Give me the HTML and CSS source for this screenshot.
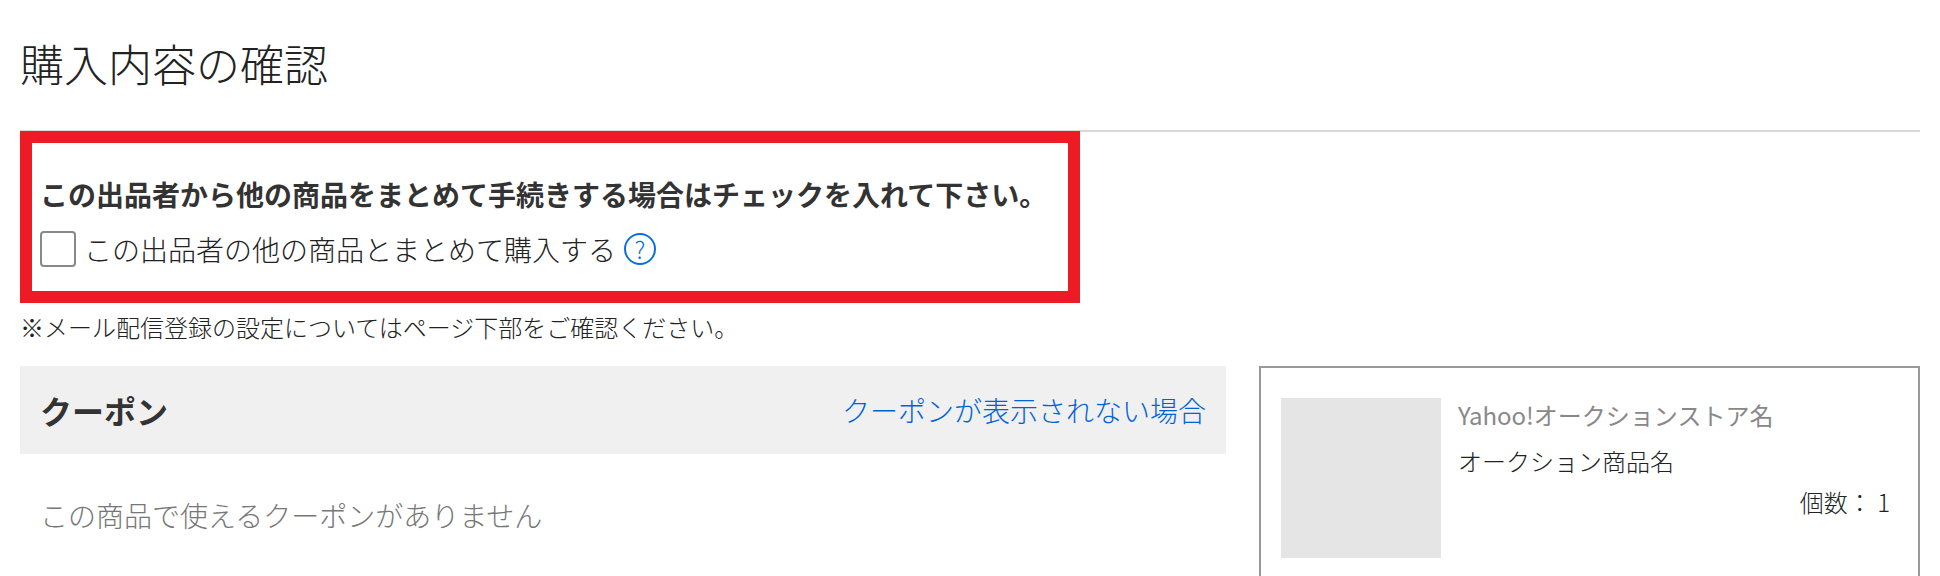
FILE: index.html
```html
<!DOCTYPE html>
<html lang="ja">
<head>
  <meta charset="UTF-8" />
  <title>購入内容の確認</title>
  <link rel="stylesheet" href="styles.css">
</head>
<body>
  <div class="page">
    <h1 class="title">購入内容の確認</h1>

    <section class="bundle">
      <p class="bundle-lead">この出品者から他の商品をまとめて手続きする場合はチェックを入れて下さい。</p>
      <label class="bundle-check">
        <span class="checkbox"></span>
        <span>この出品者の他の商品とまとめて購入する</span>
        <span class="help">?</span>
      </label>
    </section>

    <p class="notice">※メール配信登録の設定についてはページ下部をご確認ください。</p>

    <div class="columns">
      <div class="coupon">
        <header class="coupon-head">
          <h2>クーポン</h2>
          <a href="#">クーポンが表示されない場合</a>
        </header>
        <p class="coupon-empty">この商品で使えるクーポンがありません</p>
      </div>

      <aside class="item">
        <div class="item-thumb"></div>
        <div class="item-info">
          <p class="item-store">Yahoo!オークションストア名</p>
          <p class="item-name">オークション商品名</p>
          <p class="item-qty">個数： 1</p>
        </div>
      </aside>
    </div>
  </div>
</body>
</html>
```

FILE: styles.css
```css
* {
  margin: 0;
  padding: 0;
  box-sizing: border-box;
}

html, body {
  height: 576px;
  overflow: hidden;
}

body {
  background: #fff;
  color: #222;
  font-family: "Noto Sans CJK JP", "Noto Sans", sans-serif;
  font-weight: 300;
}

.page {
  padding: 0 20px;
}

.title {
  height: 132px;
  padding-top: 31px;
  border-bottom: 2px solid #d9d9d9;
  font-size: 44px;
  font-weight: 300;
  line-height: 64px;
}

.bundle {
  width: 1060px;
  height: 172px;
  margin-top: -1px;
  padding: 31px 8px 0;
  border: 12px solid #ed1c24;
  background: #fff;
}

.bundle-lead {
  color: #333;
  font-size: 28px;
  font-weight: 700;
  line-height: 40px;
}

.bundle-check {
  display: flex;
  align-items: center;
  margin-top: 17px;
  font-size: 28px;
  line-height: 36px;
}

.checkbox {
  width: 36px;
  height: 36px;
  margin-right: 8px;
  border: 2px solid #888;
  border-radius: 4px;
}

.help {
  display: flex;
  align-items: center;
  justify-content: center;
  width: 32px;
  height: 32px;
  margin-left: 8px;
  border: 2px solid #0b6fe0;
  border-radius: 50%;
  color: #0b6fe0;
  font-size: 24px;
  line-height: 1;
}

.notice {
  margin-top: 7px;
  font-size: 24px;
  line-height: 34px;
}

.columns {
  display: grid;
  grid-template-columns: 1206px 661px;
  column-gap: 33px;
  margin-top: 22px;
}

.coupon-head {
  display: flex;
  align-items: center;
  justify-content: space-between;
  height: 88px;
  padding: 0 20px;
  background: #f0f0f0;
}

.coupon-head h2 {
  color: #333;
  font-size: 32px;
  font-weight: 700;
}

.coupon-head a {
  color: #0062d9;
  font-size: 28px;
  text-decoration: none;
}

.coupon-empty {
  margin-top: 41px;
  padding-left: 20px;
  color: #777;
  font-size: 28px;
  line-height: 40px;
}

.item {
  display: flex;
  gap: 17px;
  height: 210px;
  padding: 30px 28px 0 20px;
  border: 2px solid #999;
  border-bottom: none;
}

.item-thumb {
  flex: none;
  width: 160px;
  height: 160px;
  background: #e5e5e5;
}

.item-info {
  flex: 1;
  font-size: 24px;
  line-height: 34px;
}

.item-store {
  color: #888;
  font-weight: 400;
}

.item-name {
  margin-top: 12px;
}

.item-qty {
  margin-top: 7px;
  text-align: right;
}
```
